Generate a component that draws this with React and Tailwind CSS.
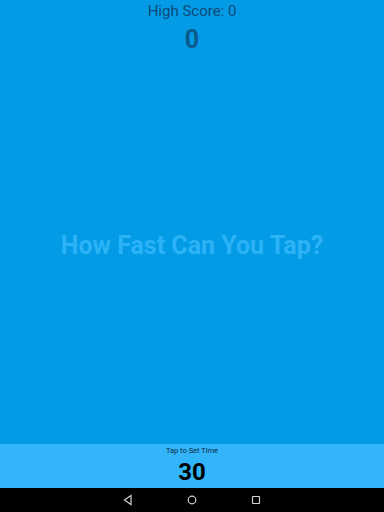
export default function App() {
	return (
		<div
			className="w-[384px] h-[512px] flex flex-col bg-[#039be5]"
			style={{ fontFamily: "Roboto, 'Liberation Sans', sans-serif" }}>
			<div className="flex-1 flex flex-col items-center">
				<p className="mt-[2px] text-[15px] leading-[18px] text-[#0d4a78]">
					High Score: 0
				</p>
				<p className="mt-[6px] text-[25px] leading-[28px] font-bold text-[#0b5a8e]">
					0
				</p>
				<div className="flex-1 flex items-center justify-center">
					<h1 className="mb-[6px] text-[25px] font-bold text-[#2cb3f7]">
						How Fast Can You Tap?
					</h1>
				</div>
			</div>
			<div className="h-[44px] bg-[#33b5fb] flex flex-col items-center">
				<p className="mt-[1px] text-[7.5px] leading-[12px] text-[#0a2a40]">
					Tap to Set Time
				</p>
				<p className="mt-[1px] text-[24px] leading-[28px] font-bold text-black">30</p>
			</div>
			<div className="h-[24px] bg-black flex items-center justify-center gap-[52px]">
				<svg width="12" height="12" viewBox="0 0 12 12" fill="none" stroke="#d0d0d0" strokeWidth="1.2">
					<path d="M9 1.5 L2.5 6 L9 10.5 Z" />
				</svg>
				<svg width="12" height="12" viewBox="0 0 12 12" fill="none" stroke="#d0d0d0" strokeWidth="1.2">
					<circle cx="6" cy="6" r="3.8" />
				</svg>
				<svg width="12" height="12" viewBox="0 0 12 12" fill="none" stroke="#d0d0d0" strokeWidth="1.2">
					<rect x="2.5" y="2.5" width="7" height="7" rx="0.5" />
				</svg>
			</div>
		</div>
	);
}
